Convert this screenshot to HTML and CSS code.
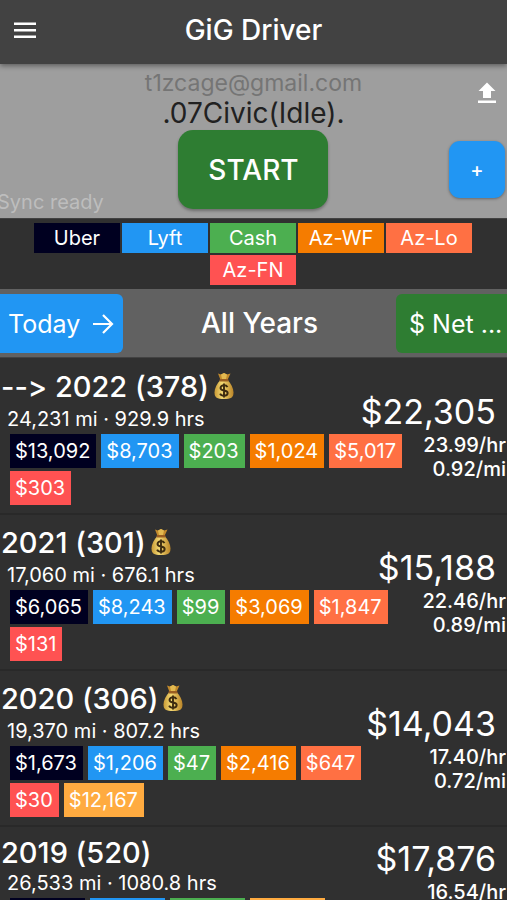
FILE: index.html
```html
<!DOCTYPE html>
<html lang="en">
<head>
<meta charset="utf-8">
<meta name="viewport" content="width=device-width, initial-scale=1">
<title>GiG Driver</title>
<link rel="stylesheet" href="styles.css">
</head>
<body>
<svg class="defs" aria-hidden="true">
  <defs>
    <linearGradient id="gold" x1="0" x2="1" y1="0" y2="0">
      <stop offset="0" stop-color="#c99a35"/><stop offset=".4" stop-color="#f3d873"/><stop offset="1" stop-color="#bb8528"/>
    </linearGradient>
  </defs>
  <symbol id="bag" viewBox="0 0 20 28">
    <path fill="#c28a2c" d="M4 1.5 7 2.5 10 1l3 1.500 3.500-1L13.500 8h-7z"/>
    <path fill="#e3b950" d="m7 2.500 3-1.500 3 1.500-1 4.500H8z"/>
    <path fill="url(#gold)" d="M6.500 8h7c3.500 3.500 6 8 6 12.500 0 5-2.500 6.500-9.500 6.500S.5 25.500.5 20.500C.5 16 3 11.500 6.500 8z"/>
    <rect x="5.500" y="7" width="9" height="2.500" rx="1.200" fill="#9a5e22"/>
    <path fill="none" stroke="#3d2b10" stroke-width="1.900" d="M13.500 15.200c-.6-1.200-1.900-1.900-3.500-1.900-2 0-3.500 1-3.500 2.600 0 3.700 7.200 1.500 7.200 5.200 0 1.700-1.600 2.700-3.700 2.700-1.900 0-3.300-.8-3.900-2.200M10 11.500v14"/>
  </symbol>
</svg>
<header class="appbar">
  <button class="menu" aria-label="Menu">
    <svg viewBox="0 0 24 18" width="24" height="18"><path fill="#fff" d="M1 1.500h22v2.500H1zM1 8h22v2.500H1zM1 14.500h22V17H1z"/></svg>
  </button>
  <h1>GiG Driver</h1>
</header>
<section class="status">
  <p class="sync">Sync ready</p>
  <div class="session">
    <p class="email">t1zcage@gmail.com</p>
    <p class="car">.07Civic(Idle).</p>
    <button class="start">START</button>
  </div>
  <div class="actions">
    <button class="upload" aria-label="Upload">
      <svg viewBox="0 0 18 22" width="18" height="22"><path fill="#fff" d="M9 .5 17.500 9H13v7H5V9H.5zM0 18.500h18V21H0z"/></svg>
    </button>
    <button class="add">+</button>
  </div>
</section>
<nav class="sources">
  <button class="source uber">Uber</button>
  <button class="source lyft">Lyft</button>
  <button class="source cash">Cash</button>
  <button class="source wf">Az-WF</button>
  <button class="source lo">Az-Lo</button>
  <button class="source fn">Az-FN</button>
</nav>
<div class="period">
  <button class="today">Today
    <svg viewBox="0 0 22 22" width="22" height="22"><path fill="none" stroke="#fff" stroke-width="2.200" d="M1 11h18M11 2l9 9-9 9"/></svg>
  </button>
  <h2>All Years</h2>
  <button class="net">$ Net ...</button>
</div>
<main class="years">
  <article class="year">
    <div class="detail">
      <h3>--&gt; 2022 (378)<svg class="bag" role="img" aria-label="Money bag"><use href="#bag"/></svg></h3>
      <p class="meta">24,231 mi · 929.9 hrs</p>
      <div class="chips"><span class="chip uber">$13,092</span><span class="chip lyft">$8,703</span><span class="chip cash">$203</span><span class="chip wf">$1,024</span><span class="chip lo">$5,017</span><span class="chip fn">$303</span></div>
    </div>
    <div class="totals"><p class="total">$22,305</p><p class="rate">23.99/hr</p><p class="rate">0.92/mi</p></div>
  </article>
  <article class="year">
    <div class="detail">
      <h3>2021 (301)<svg class="bag" role="img" aria-label="Money bag"><use href="#bag"/></svg></h3>
      <p class="meta">17,060 mi · 676.1 hrs</p>
      <div class="chips"><span class="chip uber">$6,065</span><span class="chip lyft">$8,243</span><span class="chip cash">$99</span><span class="chip wf">$3,069</span><span class="chip lo">$1,847</span><span class="chip fn">$131</span></div>
    </div>
    <div class="totals"><p class="total">$15,188</p><p class="rate">22.46/hr</p><p class="rate">0.89/mi</p></div>
  </article>
  <article class="year">
    <div class="detail">
      <h3>2020 (306)<svg class="bag" role="img" aria-label="Money bag"><use href="#bag"/></svg></h3>
      <p class="meta">19,370 mi · 807.2 hrs</p>
      <div class="chips"><span class="chip uber">$1,673</span><span class="chip lyft">$1,206</span><span class="chip cash">$47</span><span class="chip wf">$2,416</span><span class="chip lo">$647</span><span class="chip fn">$30</span><span class="chip other">$12,167</span></div>
    </div>
    <div class="totals"><p class="total">$14,043</p><p class="rate">17.40/hr</p><p class="rate">0.72/mi</p></div>
  </article>
  <article class="year">
    <div class="detail">
      <h3>2019 (520)</h3>
      <p class="meta">26,533 mi · 1080.8 hrs</p>
      <div class="chips"><span class="chip uber"></span><span class="chip lyft"></span><span class="chip cash"></span><span class="chip other"></span></div>
    </div>
    <div class="totals"><p class="total">$17,876</p><p class="rate">16.54/hr</p><p class="rate"></p></div>
  </article>
</main>
</body>
</html>
```
FILE: styles.css
```css
* { box-sizing: border-box; }
body {
  margin: 0;
  height: 100vh;
  display: flex;
  flex-direction: column;
  overflow: hidden;
  background: #303030;
  color: #fff;
  font-family: Inter, "Liberation Sans", sans-serif;
  font-variant-ligatures: none;
}
h1, h2, h3, p { margin: 0; }
h1, h2, h3 { font-weight: 500; }
button {
  border: 0;
  padding: 0;
  background: none;
  color: #fff;
  font: inherit;
}
svg { display: block; }
.defs { position: absolute; width: 0; height: 0; }

.uber { background: #000020; }
.lyft { background: #2196f3; }
.cash { background: #4caf50; }
.wf { background: #f57c00; }
.lo { background: #ff7043; }
.fn { background: #ff5252; }
.other { background: #ffab40; }

.appbar {
  flex: none;
  display: grid;
  grid-template-columns: 50px 1fr 50px;
  align-items: center;
  height: 64px;
  padding-bottom: 4px;
  background: #424242;
  box-shadow: 0 2px 5px rgba(0, 0, 0, .4);
  z-index: 1;
}
.appbar h1 { font-size: 28px; line-height: 32px; text-align: center; }
.menu { display: flex; justify-content: center; }

.status {
  flex: none;
  display: grid;
  grid-template-columns: 1fr auto 1fr;
  height: 155px;
  padding-top: 6px;
  background: #9e9e9e;
  border-bottom: 1px solid #424242;
}
.sync {
  align-self: end;
  margin-left: -3px;
  padding-bottom: 4px;
  color: #bdbdbd;
  font-size: 20px;
  line-height: 24px;
}
.session { display: flex; flex-direction: column; align-items: center; }
.email { color: #757575; font-size: 23px; line-height: 27px; }
.car { color: #212121; font-size: 28px; line-height: 33px; }
.start {
  width: 150px;
  height: 79px;
  border-radius: 15px;
  background: #2e7d32;
  font-size: 28px;
  font-weight: 500;
  box-shadow: 0 2px 3px rgba(0, 0, 0, .3);
}
.actions {
  display: flex;
  flex-direction: column;
  align-items: flex-end;
  gap: 37px;
  padding: 12px 2px 0 0;
}
.upload { padding-right: 9px; }
.add {
  width: 56px;
  height: 57px;
  border-radius: 11px;
  background: #2196f3;
  font-size: 20px;
  font-weight: 500;
  box-shadow: 0 1px 3px rgba(0, 0, 0, .35);
}

.sources {
  flex: none;
  display: flex;
  flex-wrap: wrap;
  justify-content: center;
  gap: 2px;
  padding: 4px 33px 4px 32px;
}
.source { width: 86px; height: 30px; font-size: 20px; line-height: 30px; }

.period {
  flex: none;
  display: grid;
  grid-template-columns: 123px 1fr 111px;
  align-items: center;
  height: 69px;
  background: #616161;
  border-bottom: 1px solid #424242;
}
.period h2 { font-size: 28px; line-height: 32px; text-align: center; }
.today, .net { height: 59px; padding-top: 2px; font-size: 25px; }
.today {
  display: flex;
  align-items: center;
  justify-content: space-between;
  padding-left: 8px;
  padding-right: 9px;
  border-radius: 0 6px 6px 0;
  background: #2196f3;
}
.net {
  overflow: hidden;
  padding-left: 13px;
  border-radius: 6px 0 0 6px;
  background: #2e7d32;
  text-align: left;
  white-space: nowrap;
}

.years { flex: 1; min-height: 0; padding-top: 1px; overflow: hidden; }
.year {
  display: flex;
  align-items: center;
  padding: 11px 0 8px;
  border-bottom: 2px solid #292929;
}
.detail { flex: 1; min-width: 0; }
.detail h3 {
  display: flex;
  align-items: center;
  gap: 5px;
  margin-bottom: 2px;
  padding-left: 1px;
  font-size: 29px;
  line-height: 29px;
}
.bag { width: 20px; height: 28px; margin: 2px 0 3px; }
.meta { padding-left: 7px; font-size: 20px; line-height: 29px; }
.chips { display: flex; flex-wrap: wrap; gap: 3px 5px; padding-left: 10px; }
.chip {
  height: 34px;
  padding: 0 6px 0 5px;
  font-size: 20px;
  line-height: 34px;
}
.chip:empty { width: 75px; }
.totals {
  display: flex;
  flex-direction: column;
  align-items: flex-end;
  width: 100px;
  margin-bottom: 4px;
  padding-right: 1px;
  white-space: nowrap;
}
.total { padding-right: 10px; font-size: 34px; line-height: 42px; }
.rate { min-height: 24px; font-size: 20px; font-weight: 500; line-height: 24px; }
```
